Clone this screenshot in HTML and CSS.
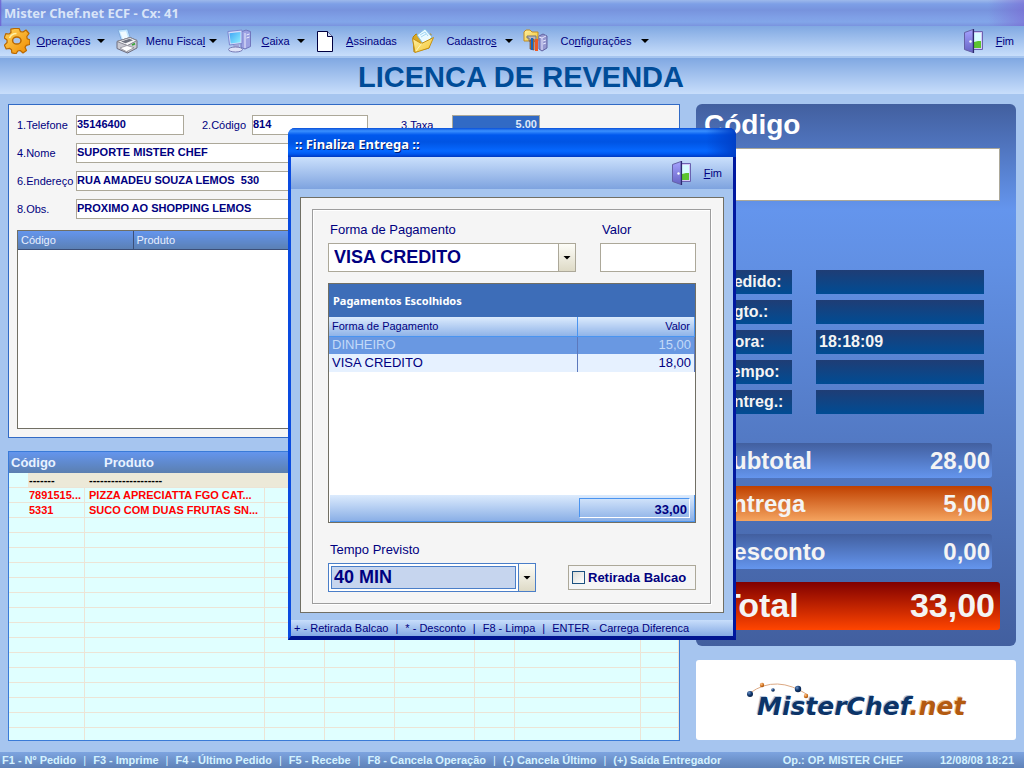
FILE: index.html
```html
<!DOCTYPE html>
<html lang="pt-BR">
<head>
<meta charset="utf-8">
<title>Mister Chef.net ECF</title>
<link rel="stylesheet" href="styles.css">
</head>
<body>
<svg class="defs" width="0" height="0" aria-hidden="true">
  <defs>
    <linearGradient id="gold" x1="0" y1="0" x2="1" y2="1"><stop offset="0" stop-color="#ffd45a"/><stop offset="1" stop-color="#f08a00"/></linearGradient>
    <linearGradient id="violet" x1="0" y1="0" x2="0" y2="1"><stop offset="0" stop-color="#a5a2ff"/><stop offset="1" stop-color="#6663c4"/></linearGradient>
    <linearGradient id="screen" x1="0" y1="0" x2="1" y2="1"><stop offset="0" stop-color="#3fa4f5"/><stop offset="1" stop-color="#8ff0ff"/></linearGradient>
    <linearGradient id="folder" x1="0" y1="0" x2="1" y2="1"><stop offset="0" stop-color="#fff0a0"/><stop offset="1" stop-color="#f3c532"/></linearGradient>
    <radialGradient id="navyball" cx=".35" cy=".3" r=".8"><stop offset="0" stop-color="#6c93c8"/><stop offset=".5" stop-color="#12386e"/><stop offset="1" stop-color="#061d40"/></radialGradient>
    <radialGradient id="orangeball" cx=".35" cy=".3" r=".8"><stop offset="0" stop-color="#ffc48a"/><stop offset=".6" stop-color="#d0701c"/><stop offset="1" stop-color="#8a4208"/></radialGradient>
    <symbol id="door" viewBox="0 0 20 24">
      <path d="M9 2.500h9.500v18H9z" fill="#d5c9f5" stroke="#6a62b0"/>
      <path d="M10 4h7v10h-7z" fill="#d8fcff"/>
      <path d="M10 13l4-1h3v7h-7z" fill="#5cc42e"/>
      <path d="M.5 3.500l8.500-3v23l-8.500-3z" fill="url(#violet)" stroke="#6461a5"/>
      <path d="M9.500 0v24" stroke="#2c2a70" stroke-width="1.200"/>
      <circle cx="6.500" cy="12.500" r="1.200" fill="#fff"/>
    </symbol>
  </defs>
</svg>

<header class="titlebar">Mister Chef.net ECF - Cx: 41</header>

<nav class="menubar">
  <button class="menu-item">
    <svg class="icon" width="26" height="26" viewBox="0 0 26 26">
      <path transform="translate(13 13)" d="M-2.500-12.500L2-12.800 3.500-9.300 6-9 9-11 12-7.500 9.800-4.500 10.200-2.300 13-1 12.600 3.500 9.300 4.300 8 6.300 9.500 9.500 6 12 3.200 9.500.8 10 -1 12.800-5.200 11.800-5.500 8.800-7.500 7.300-10.800 8-12.600 4.200-9.900 1.500-10-1-12.800-3.200-11.200-7.300-8-7-6-8.500-6.200-11.800Z" fill="url(#gold)" stroke="#b96800" stroke-width="1.2" stroke-linejoin="round"/>
      <ellipse cx="12.800" cy="12.500" rx="4.200" ry="3.600" fill="#a9c4ec" stroke="#b96800" stroke-width="1.500"/>
      <path d="M5.500 10q2-4.500 7-4.500" fill="none" stroke="#fff0a5" stroke-width="1.600"/>
    </svg>
    <span class="menu-label"><u>O</u>perações</span><span class="arrow"></span>
  </button>
  <button class="menu-item">
    <svg class="icon" width="24" height="26" viewBox="0 0 24 26">
      <path d="M3 2l9.500-1 3.500 11-9 2z" fill="#bfe4ff" stroke="#7fa9dc"/>
      <path d="M5 4l6-.7 2.500 7.500-5.500 1z" fill="#effaff"/>
      <path d="M2 13.500l13-4 7 3v7.500l-9.500 5L2 20.500z" fill="#c9c9d1" stroke="#6c6c7e"/>
      <path d="M2 13.500l13-4 7 3-9.500 5z" fill="#f6f6f8" stroke="#85858f"/>
      <path d="M6 13.500l8.500-2.700 3.500 1.400-7.500 3z" fill="#6f7380"/>
      <path d="M12.500 17.500v7" stroke="#77778a" stroke-width=".7"/>
      <path d="M5 20l7-2.500 7 2.200-7.500 4z" fill="#fff" stroke="#85858f" stroke-width=".7"/>
      <path d="M17 17l3-1.400" stroke="#35a535" stroke-width="1.800"/>
    </svg>
    <span class="menu-label">Menu Fisca<u>l</u></span><span class="arrow"></span>
  </button>
  <button class="menu-item">
    <svg class="icon" width="24" height="24" viewBox="0 0 24 24">
      <path d="M14 3l5-2 4.500 1.500v15L18 20l-4-1.500z" fill="#9ba0e2" stroke="#7176bd"/>
      <path d="M18 4v15M19.500 6l3-1M19.500 9l3-1" stroke="#ecefff"/>
      <path d="M.8 2.500L15 1v13.500L2.500 16z" fill="#d5dcfb" stroke="#7a86cf"/>
      <path d="M2.500 4.200l11-1.300v10.300l-9.800 1.200z" fill="url(#screen)"/>
      <path d="M6 16l6-1v4l-5 .5z" fill="#a3a7d8"/>
      <ellipse cx="8.500" cy="20.500" rx="7" ry="2.500" fill="#dfe2f7" stroke="#777bb5"/>
    </svg>
    <span class="menu-label"><u>C</u>aixa</span><span class="arrow"></span>
  </button>
  <button class="menu-item">
    <svg class="icon" width="24" height="24" viewBox="0 0 24 24">
      <path d="M2.500 2.500h10l5 5v15h-15z" fill="#fff" stroke="#000040"/>
      <path d="M12.500 2.500v5h5" fill="#c9d9f4" stroke="#000040"/>
    </svg>
    <span class="menu-label"><u>A</u>ssinadas</span>
  </button>
  <button class="menu-item">
    <svg class="icon" width="24" height="26" viewBox="0 0 24 26">
      <path d="M2 9l3-3 5 2 10-2-2 14L3 24z" fill="#dba922" stroke="#b4820e"/>
      <path d="M6 7l8-6 7 8-8 8z" fill="#eafaff" stroke="#82bfe6"/>
      <path d="M9 7l5-3 3 4M10 9l5-3" fill="none" stroke="#a2d6f5"/>
      <path d="M1.500 10.500l9 5 12-6L18 20 4 24.500z" fill="url(#folder)" stroke="#c49015"/>
      <path d="M10.500 15.500L5 23" stroke="#fff6b8"/>
    </svg>
    <span class="menu-label">Cadastro<u>s</u></span><span class="arrow"></span>
  </button>
  <button class="menu-item">
    <svg class="icon" width="25" height="24" viewBox="0 0 25 24">
      <path d="M1 3l2-2h4l2 2h6v9H1z" fill="url(#folder)" stroke="#c18c24"/>
      <path d="M4 7h9v5H6v-3H4z" fill="#b8b8c4" stroke="#777"/>
      <path d="M7 11l4-1v11l-4-1z" fill="#b9773a" stroke="#7a4822" stroke-width=".7"/>
      <path d="M9 9v12" stroke="#1466c0" stroke-width="2"/>
      <path d="M13.500 10v12" stroke="#ef5a24" stroke-width="3"/>
      <path d="M16 7l4-2 4 2v12l-5 3-3-2z" fill="#9698d0" stroke="#6264a2"/>
      <path d="M19 9v12M16 8l3 1 4-2M20 12l3-1M20 15l3-1" stroke="#e5e6ff" fill="none"/>
    </svg>
    <span class="menu-label">Co<u>n</u>figurações</span><span class="arrow"></span>
  </button>
  <button class="exit"><svg width="20" height="24"><use href="#door"/></svg><span><u>F</u>im</span></button>
</nav>

<h1 class="banner">LICENCA DE REVENDA</h1>

<main class="workspace">
  <div class="left">
    <section class="customer">
      <form class="fields">
        <label for="tel">1.Telefone</label><input id="tel" value="35146400">
        <label for="cod" class="second">2.Código</label><input id="cod" value="814">
        <label for="taxa" class="third">3.Taxa</label><input id="taxa" class="fee" value="5.00">
        <label for="nome" class="start">4.Nome</label><input id="nome" class="wide" value="SUPORTE MISTER CHEF">
        <label for="end" class="start">6.Endereço</label><input id="end" class="wide" value="RUA AMADEU SOUZA LEMOS  530">
        <label for="obs" class="start">8.Obs.</label><input id="obs" class="wide" value="PROXIMO AO SHOPPING LEMOS">
      </form>
      <div class="history">
        <table>
          <colgroup><col class="h-code"><col></colgroup>
          <thead><tr><th>Código</th><th>Produto</th></tr></thead>
        </table>
      </div>
    </section>

    <section class="order">
      <table>
        <colgroup><col class="o1"><col class="o2"><col class="o3"><col class="o4"><col class="o5"><col class="o6"><col class="o7"><col class="o8"><col></colgroup>
        <thead><tr><th colspan="2">Código</th><th class="prod">Produto</th><th colspan="6"></th></tr></thead>
        <tbody>
          <tr class="current"><td></td><td>-------</td><td>--------------------</td><td colspan="6"></td></tr>
          <tr><td></td><td>7891515...</td><td>PIZZA APRECIATTA FGO CAT...</td><td></td><td></td><td></td><td></td><td></td><td></td></tr>
          <tr><td></td><td>5331</td><td>SUCO COM DUAS FRUTAS SN...</td><td></td><td></td><td></td><td></td><td></td><td></td></tr>
          <tr><td></td><td></td><td></td><td></td><td></td><td></td><td></td><td></td><td></td></tr>
          <tr><td></td><td></td><td></td><td></td><td></td><td></td><td></td><td></td><td></td></tr>
          <tr><td></td><td></td><td></td><td></td><td></td><td></td><td></td><td></td><td></td></tr>
          <tr><td></td><td></td><td></td><td></td><td></td><td></td><td></td><td></td><td></td></tr>
          <tr><td></td><td></td><td></td><td></td><td></td><td></td><td></td><td></td><td></td></tr>
          <tr><td></td><td></td><td></td><td></td><td></td><td></td><td></td><td></td><td></td></tr>
          <tr><td></td><td></td><td></td><td></td><td></td><td></td><td></td><td></td><td></td></tr>
          <tr><td></td><td></td><td></td><td></td><td></td><td></td><td></td><td></td><td></td></tr>
          <tr><td></td><td></td><td></td><td></td><td></td><td></td><td></td><td></td><td></td></tr>
          <tr><td></td><td></td><td></td><td></td><td></td><td></td><td></td><td></td><td></td></tr>
          <tr><td></td><td></td><td></td><td></td><td></td><td></td><td></td><td></td><td></td></tr>
          <tr><td></td><td></td><td></td><td></td><td></td><td></td><td></td><td></td><td></td></tr>
          <tr><td></td><td></td><td></td><td></td><td></td><td></td><td></td><td></td><td></td></tr>
          <tr><td></td><td></td><td></td><td></td><td></td><td></td><td></td><td></td><td></td></tr>
          <tr><td></td><td></td><td></td><td></td><td></td><td></td><td></td><td></td><td></td></tr>
        </tbody>
      </table>
    </section>
  </div>

  <div class="right">
    <section class="summary">
      <label class="code-label" for="codigo">Código</label>
      <input class="code-input" id="codigo">
      <dl class="info">
        <dt>Pedido:</dt><dd></dd>
        <dt>Pgto.:</dt><dd></dd>
        <dt>Hora:</dt><dd>18:18:09</dd>
        <dt>Tempo:</dt><dd></dd>
        <dt>Entreg.:</dt><dd></dd>
      </dl>
      <div class="sums">
        <div class="sum"><span>Subtotal</span><span>28,00</span></div>
        <div class="sum fee-sum"><span>Entrega</span><span>5,00</span></div>
        <div class="sum discount"><span>Desconto</span><span>0,00</span></div>
        <div class="sum total"><span>Total</span><span>33,00</span></div>
      </div>
    </section>
    <section class="brand">
      <svg width="224" height="44" viewBox="0 0 224 44" role="img" aria-label="MisterChef.net">
        <path d="M6 15Q32-4 64 17" fill="none" stroke="#dca984" stroke-width="1"/>
        <circle cx="6" cy="16" r="3" fill="url(#navyball)"/>
        <circle cx="18" cy="7" r="2.200" fill="url(#orangeball)"/>
        <circle cx="29" cy="12" r="1.800" fill="url(#navyball)"/>
        <circle cx="54" cy="11" r="3.200" fill="url(#navyball)"/>
        <circle cx="62" cy="18" r="2.200" fill="url(#orangeball)"/>
        <text class="logo" x="13" y="37">MisterChef<tspan class="logo-net">.net</tspan></text>
      </svg>
    </section>
  </div>
</main>

<footer class="statusbar">
  <span>F1 - Nº Pedido</span><i>|</i><span>F3 - Imprime</span><i>|</i><span>F4 - Último Pedido</span><i>|</i><span>F5 - Recebe</span><i>|</i><span>F8 - Cancela Operação</span><i>|</i><span>(-) Cancela Último</span><i>|</i><span>(+) Saída Entregador</span>
  <span class="operator">Op.: OP. MISTER CHEF</span><time>12/08/08 18:21</time>
</footer>

<div class="dialog" role="dialog" aria-labelledby="dlg-title">
  <h2 class="dialog-title" id="dlg-title">:: Finaliza Entrega ::</h2>
  <div class="dialog-body">
    <div class="dialog-tools">
      <button class="exit"><svg width="20" height="24"><use href="#door"/></svg><span><u>F</u>im</span></button>
    </div>
    <div class="frame">
      <div class="group">
        <div class="pay-row">
          <div class="pay-form">
            <label for="forma">Forma de Pagamento</label>
            <div class="combo"><select id="forma"><option>VISA CREDITO</option></select><span class="drop"><span class="arrow"></span></span></div>
          </div>
          <div class="pay-value">
            <label for="valor">Valor</label>
            <input id="valor">
          </div>
        </div>
        <div class="payments">
          <h3>Pagamentos Escolhidos</h3>
          <table>
            <colgroup><col><col class="p-value"></colgroup>
            <thead><tr><th>Forma de Pagamento</th><th>Valor</th></tr></thead>
            <tbody>
              <tr class="selected"><td>DINHEIRO</td><td>15,00</td></tr>
              <tr><td>VISA CREDITO</td><td>18,00</td></tr>
            </tbody>
          </table>
          <div class="payments-total"><output>33,00</output></div>
        </div>
        <div class="time-row">
          <div class="time">
            <label for="tempo">Tempo Previsto</label>
            <div class="combo focused"><select id="tempo"><option>40 MIN</option></select><span class="drop"><span class="arrow"></span></span></div>
          </div>
          <label class="pickup"><input type="checkbox">Retirada Balcao</label>
        </div>
      </div>
    </div>
    <div class="dialog-status"><span>+ - Retirada Balcao</span><i>|</i><span>* - Desconto</span><i>|</i><span>F8 - Limpa</span><i>|</i><span>ENTER - Carrega Diferenca</span></div>
  </div>
</div>
</body>
</html>
```
FILE: styles.css
```css
* { box-sizing: border-box; }

body {
  margin: 0;
  height: 100vh;
  display: flex;
  flex-direction: column;
  position: relative;
  overflow: hidden;
  background: #a6c5ef;
  color: #000080;
  font: 11px/14px "Liberation Sans", Arial, sans-serif;
}

.defs { position: absolute; }

button, input, select { font: inherit; color: inherit; margin: 0; padding: 0; border-radius: 0; }
button { background: none; border: 0; }
i { font-style: normal; }
table { border-collapse: collapse; table-layout: fixed; width: 100%; }
th, td { padding: 0; text-align: left; white-space: nowrap; overflow: hidden; }

.titlebar {
  flex: none;
  height: 26px;
  padding: 0 4px;
  color: #d8e4f8;
  font: bold 13px/26px "Noto Sans", sans-serif;
  background:
    linear-gradient(90deg, #6a5bd0 0, transparent 2px),
    linear-gradient(270deg, #7a5fd088 0, #7a5fd000 36px),
    linear-gradient(#9db9eb 0, #7d9fe6 4px, #7793dd 10px, #7f9fe6 17px, #82a6e9 22px, #7a93df 26px);
}

.menubar {
  flex: none;
  height: 30px;
  display: grid;
  grid-template-columns: 108px 112px 88px 96px 112px 136px 1fr;
  padding: 0 10px 0 4px;
  background: linear-gradient(#80a8e2, #c8defb);
}
.menu-item { display: flex; align-items: center; padding: 0 7px 0 3px; }
.menu-item:first-child { padding-left: 0; }
.menu-item .icon { flex: none; }
.menu-label { flex: 1; padding-left: 3px; text-align: center; }
.menu-item:first-child .menu-label { padding-left: 0; }
.arrow {
  flex: none;
  width: 8px;
  height: 4px;
  background: #000;
  clip-path: polygon(0 0, 100% 0, 50% 100%);
}
.exit { display: flex; align-items: center; gap: 12px; justify-self: end; }

.banner {
  flex: none;
  height: 36px;
  margin: 2px 0 0;
  padding-left: 18px;
  text-align: center;
  color: #004c98;
  font: bold 29px/38px "Liberation Sans", Arial, sans-serif;
  background: linear-gradient(#80a8e2, #c8defb);
}

.workspace {
  flex: 1;
  min-height: 0;
  display: grid;
  grid-template-columns: 1fr 320px;
  gap: 16px;
  padding: 10px 8px 11px;
}
.left { min-width: 0; min-height: 0; display: flex; flex-direction: column; gap: 13px; }

.customer {
  flex: none;
  padding: 10px 8px 8px;
  background: #f5f5f5;
  border: 1px solid #316ac5;
}
.fields {
  display: grid;
  grid-template-columns: 59px 108px 68px 116px 84px 88px 1fr;
  grid-auto-rows: 20px;
  row-gap: 8px;
}
.fields label { line-height: 20px; }
.fields .start { grid-column: 1; }
.fields .second { padding-left: 18px; }
.fields .third { padding-left: 33px; }
.fields input {
  min-width: 0;
  height: 20px;
  padding: 0 2px 2px 0;
  border: 1px solid #aca899;
  background: #fff;
  font-weight: bold;
}
.fields .wide { grid-column: 2 / -1; }
.fields .fee { background: #316ac5; color: #dfe9fa; text-align: right; }

.history {
  height: 199px;
  margin-top: 11px;
  background: #fff;
  border: 1px solid #716f64;
}
.h-code { width: 115px; }
.history th {
  height: 18px;
  padding-left: 3px;
  color: #e8f0ff;
  font-weight: normal;
  background: linear-gradient(#6495ed, #5b80b4);
  border: solid #3c4f78;
  border-width: 0 1px 1px 0;
}

.order {
  flex: 1;
  min-height: 0;
  overflow: hidden;
  background: #e0ffff;
  border: 1px solid #3a7bd8;
}
.o1 { width: 19px; }
.o2 { width: 57px; }
.o3 { width: 180px; }
.o4 { width: 60px; }
.o5 { width: 70px; }
.o6 { width: 80px; }
.o7 { width: 40px; }
.o8 { width: 126px; }
.order table { border-collapse: separate; border-spacing: 0; }
.order thead tr { background: linear-gradient(#6495ed, #5b7fb0); }
.order th { height: 21px; padding-left: 2px; color: #e8f2ff; font-size: 13px; }
.order .prod { padding-left: 19px; }
.order td {
  height: 15px;
  padding: 0 0 0 4px;
  border: solid #ece4d6;
  border-width: 0 1px 1px 0;
  font-weight: bold;
  color: #f00;
}
.order td:first-child { border-right: 0; }
.order td:nth-child(2) { padding-left: 1px; }
.order .current td { color: #000; background: #ece9d8; border-right: 0; }
.order .current td:first-child { background: #e0ffff; }

.right { min-height: 0; display: flex; flex-direction: column; gap: 14px; padding-bottom: 1px; }

.summary {
  flex: 1;
  display: flex;
  flex-direction: column;
  padding: 4px 16px 16px 8px;
  border-radius: 6px;
  color: #f4f4f4;
  font-weight: bold;
  background: linear-gradient(#425f9f 0, #6495ed 105px, #6190e4 160px, #425f9f 100%);
}
.code-label { font-size: 28px; line-height: 34px; color: #fff; }
.code-input { width: 100%; height: 53px; margin-top: 6px; background: #fff; border: 1px solid #aca899; }
.info {
  display: grid;
  grid-template-columns: 72px 1fr;
  grid-auto-rows: 24px;
  gap: 6px 24px;
  margin: 69px 16px 0;
  font-size: 16px;
  line-height: 24px;
}
.info dt, .info dd { margin: 0; background: linear-gradient(#1f3d75, #004c94); }
.info dt { padding-left: 3px; }
.info dd { padding-left: 3px; }
.sums { display: flex; flex-direction: column; margin: auto 0 0 8px; }
.sum {
  display: flex;
  justify-content: space-between;
  height: 35px;
  margin: 0 8px 8px 0;
  padding: 0 2px 0 4px;
  border-radius: 3px;
  font-size: 24px;
  line-height: 35px;
  background: linear-gradient(#425f9f, #6495ed);
}
.fee-sum { margin-bottom: 13px; background: linear-gradient(#c04000, #f4a460); }
.discount { margin-bottom: 13px; }
.total {
  height: 48px;
  margin: 0;
  padding: 0 5px 0 8px;
  font-size: 34px;
  line-height: 46px;
  background: linear-gradient(#800000, #ff4500);
}

.brand {
  flex: none;
  height: 80px;
  display: flex;
  align-items: center;
  justify-content: center;
  background: #fff;
  border-radius: 3px;
}
.logo {
  font: italic bold 25px "DejaVu Sans", sans-serif;
  fill: #0c3468;
  text-shadow: -1px -1px 0 #b9cbe0;
}
.logo-net { fill: #b35a10; text-shadow: -1px -1px 0 #ecc49c; }

.statusbar {
  flex: none;
  display: flex;
  gap: 7px;
  height: 16px;
  padding: 0 10px 0 2px;
  color: #d4f2ff;
  font-weight: bold;
  line-height: 17px;
  white-space: nowrap;
  background: linear-gradient(#7da4e0, #5f82b8);
}
.statusbar i { font-weight: normal; }
.operator { margin-left: auto; }
.statusbar time { margin-left: 30px; }

.dialog {
  position: absolute;
  left: 288px;
  top: 128px;
  width: 448px;
  border: solid #0a3fd8;
  border-width: 0 3px 4px;
  border-color: #0a3fd8 #0018a0 #001490 #0a4be0;
  border-radius: 7px 7px 0 0;
  background: #0058ee;
}
.dialog-title {
  margin: 0 -3px;
  height: 29px;
  padding: 1px 0 0 7px;
  border-radius: 7px 7px 0 0;
  color: #fff;
  font: bold 13px/30px "Noto Sans", sans-serif;
  text-shadow: 1px 1px 0 #001a70;
  background:
    linear-gradient(270deg, #0040c8 0, transparent 30px),
    linear-gradient(#0a50d8 0, #3a90ff 3px, #0058ee 7px, #0054e3 14px, #0668ff 23px, #0058f0 26px, #0038c0 29px);
}
.dialog-body { display: flex; flex-direction: column; background: #a6c5ef; }
.dialog-tools {
  height: 32px;
  display: flex;
  justify-content: flex-end;
  padding: 0 11px 0 0;
  background: linear-gradient(#cbe0fc, #7ea3df);
}
.frame {
  margin: 8px 9px 7px;
  padding: 11px 12px 8px 11px;
  background: #f5f5f5;
  border: 1px solid #716f64;
}
.group {
  padding: 12px 14px 11px 15px;
  border: 1px solid #9d9d9d;
  box-shadow: inset 1px 1px 0 #fff, 1px 1px 0 #fff;
}
.group label { font-size: 13px; }
.pay-row { display: grid; grid-template-columns: 248px 1fr; gap: 24px; }
.pay-form > label, .pay-value > label, .time > label { display: block; height: 21px; line-height: 15px; padding-left: 2px; }
.pay-value input { width: 100%; height: 29px; background: #fff; border: 1px solid #aca899; display: block; }
.combo { display: flex; height: 29px; background: #fff; border: 1px solid #aca899; }
.combo select {
  flex: 1;
  min-width: 0;
  appearance: none;
  padding: 0 0 2px 5px;
  border: 0;
  background: none;
  font-size: 18px;
  font-weight: bold;
}
.drop {
  flex: none;
  width: 17px;
  display: flex;
  align-items: center;
  justify-content: center;
  border-left: 1px solid #aca899;
  background: linear-gradient(#fdfdf8, #dedac6);
}
.focused, .focused .drop { border-color: #4a7ec8; }
.focused select { margin: 2px; padding-left: 2px; background: #c6d5ee; border: 1px solid #4a7ec8; }

.payments {
  display: flex;
  flex-direction: column;
  height: 240px;
  margin-top: 11px;
  background: #fff;
  border: 1px solid #716f64;
}
.payments h3 {
  flex: none;
  margin: 0;
  padding-left: 4px;
  color: #fff;
  font: bold 11px/33px "Noto Sans", sans-serif;
  background: #3d6db8;
}
.p-value { width: 117px; }
.payments th {
  height: 19px;
  padding: 0 4px 0 3px;
  font-weight: normal;
  background: linear-gradient(#dcebfd, #8fb3e8);
  border: solid #4a94f0;
  border-width: 0 1px 1px 0;
}
.payments td {
  height: 18px;
  padding: 0 3px;
  font-size: 13px;
  background: #e6f1ff;
  border-right: 1px solid #5c78bc;
}
.payments th:last-child, .payments td:last-child { text-align: right; }
.payments .selected td { background: #6998e2; color: #c3daf8; }
.payments-total {
  height: 27px;
  margin: auto 0 0 1px;
  padding: 3px 4px 3px 0;
  display: flex;
  justify-content: flex-end;
  background: linear-gradient(#dcebfd, #8aafe6);
  border: solid #4a94f0;
  border-width: 0 1px 1px 0;
}
.payments-total output {
  width: 111px;
  padding-right: 2px;
  text-align: right;
  font-size: 13px;
  font-weight: bold;
  line-height: 21px;
  border: 1px solid;
  border-color: #4a94f0 #fff #fff #4a94f0;
}

.time-row { display: flex; justify-content: space-between; align-items: flex-end; margin-top: 19px; }
.time { width: 208px; }
.pickup {
  display: flex;
  align-items: center;
  gap: 3px;
  width: 128px;
  height: 25px;
  margin-bottom: 2px;
  padding-left: 3px;
  font-weight: bold;
  white-space: nowrap;
  border: 1px solid #aca899;
}
.pickup input {
  appearance: none;
  width: 13px;
  height: 13px;
  border: 1px solid #1c5180;
  background: linear-gradient(135deg, #dcdcd7, #fff);
}

.dialog-status {
  display: flex;
  gap: 7px;
  height: 16px;
  padding-left: 3px;
  line-height: 17px;
  white-space: nowrap;
  background: linear-gradient(#c8defb, #84a9e4);
}
```
